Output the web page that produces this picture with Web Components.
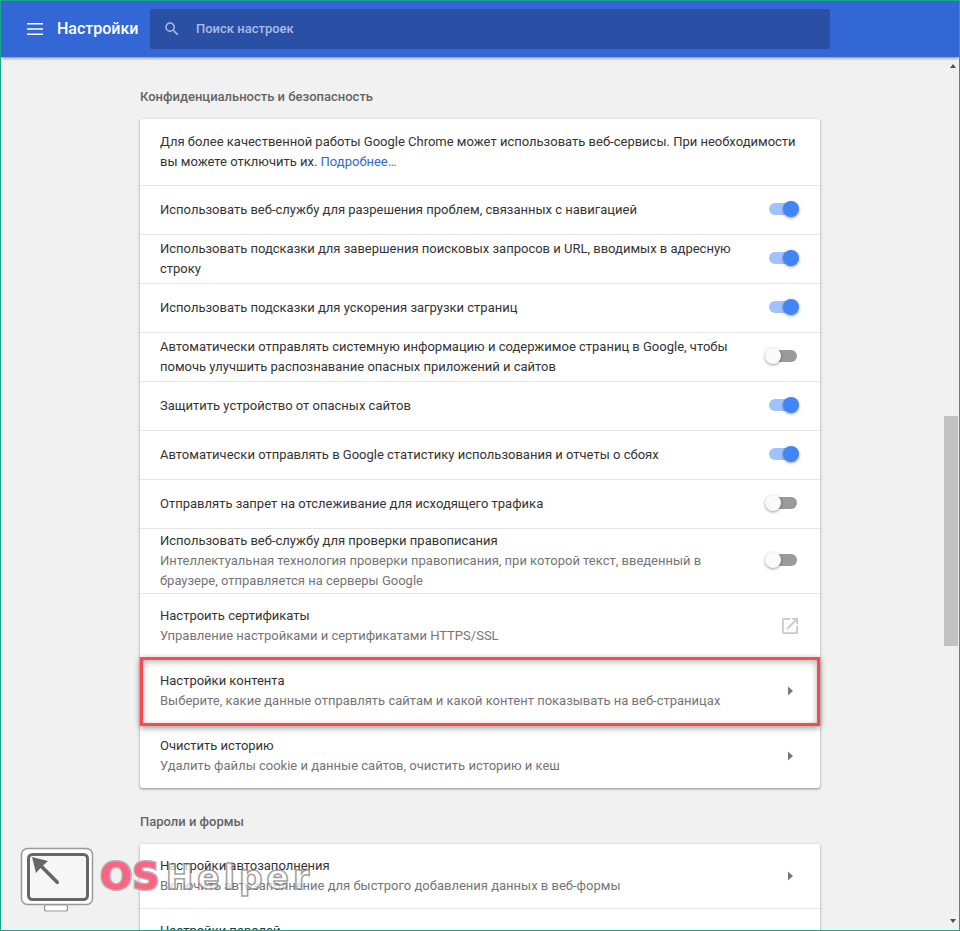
<!DOCTYPE html>
<html lang="ru"><head><meta charset="utf-8"><style>
html,body{margin:0;height:100%;overflow:hidden;background:#f1f1f1}
body{font:13px/20px Roboto,"Liberation Sans",sans-serif;color:#333}
</style></head><body>
<settings-app>
  <settings-section first heading="Конфиденциальность и безопасность">
    <settings-row kind="intro">Для более качественной работы Google Chrome может использовать веб-сервисы. При необходимости вы можете отключить их. <a href="#" style="color:#3367d6;text-decoration:none">Подробнее…</a></settings-row>
    <settings-row toggle="on">Использовать веб-службу для разрешения проблем, связанных с навигацией</settings-row>
    <settings-row toggle="on">Использовать подсказки для завершения поисковых запросов и URL, вводимых в адресную строку</settings-row>
    <settings-row toggle="on">Использовать подсказки для ускорения загрузки страниц</settings-row>
    <settings-row toggle="off">Автоматически отправлять системную информацию и содержимое страниц в Google, чтобы помочь улучшить распознавание опасных приложений и сайтов</settings-row>
    <settings-row toggle="on">Защитить устройство от опасных сайтов</settings-row>
    <settings-row toggle="on">Автоматически отправлять в Google статистику использования и отчеты о сбоях</settings-row>
    <settings-row toggle="off">Отправлять запрет на отслеживание для исходящего трафика</settings-row>
    <settings-row toggle="off" sub="Интеллектуальная технология проверки правописания, при которой текст, введенный в браузере, отправляется на серверы Google">Использовать веб-службу для проверки правописания</settings-row>
    <settings-row trail="external" sub="Управление настройками и сертификатами HTTPS/SSL">Настроить сертификаты</settings-row>
    <settings-row trail="arrow" marked sub="Выберите, какие данные отправлять сайтам и какой контент показывать на веб-страницах">Настройки контента</settings-row>
    <settings-row trail="arrow" sub="Удалить файлы cookie и данные сайтов, очистить историю и кеш">Очистить историю</settings-row>
  </settings-section>
  <settings-section heading="Пароли и формы">
    <settings-row trail="arrow" sub="Включить автозаполнение для быстрого добавления данных в веб-формы">Настройки автозаполнения</settings-row>
    <settings-row trail="arrow" sub="Предложения сохранять пароли">Настройки паролей</settings-row>
  </settings-section>
</settings-app>
<script>
customElements.define('settings-toggle',class extends HTMLElement{
  connectedCallback(){
    const s=this.attachShadow({mode:'open'});
    s.innerHTML=`<style>
    :host{display:block;position:relative;width:34px;height:16px;flex:none;margin:-2px 1px 0 0}
    .track{position:absolute;left:4px;right:2px;top:2px;height:12px;border-radius:6px;background:#9a9a9a}
    .knob{position:absolute;left:0;top:0;width:16px;height:16px;border-radius:50%;background:#fafafa;box-shadow:0 1px 3px rgba(0,0,0,.4)}
    :host([on]) .track{background:#a0c3ff}
    :host([on]) .knob{left:18px;background:#4285f4}
    </style><div class="track"></div><div class="knob"></div>`;
  }
});
customElements.define('settings-row',class extends HTMLElement{
  connectedCallback(){
    const s=this.attachShadow({mode:'open'});
    const sub=this.getAttribute('sub'), tg=this.getAttribute('toggle'), tr=this.getAttribute('trail');
    let end='';
    if(tg) end=`<settings-toggle ${tg==='on'?'on':''}></settings-toggle>`;
    if(tr==='arrow') end=`<svg class="ic" width="5" height="10" viewBox="0 0 5 10"><path d="M0 0.5 5 5 0 9.5z" fill="#777"/></svg>`;
    if(tr==='external') end=`<svg class="ext" width="16" height="16" viewBox="3 3 18 18"><path fill="#c9c9c9" d="M19 19H5V5h7V3H5a2 2 0 0 0-2 2v14a2 2 0 0 0 2 2h14a2 2 0 0 0 2-2v-7h-2v7zM14 3v2h3.59l-9.83 9.83 1.41 1.41L19 6.41V10h2V3h-7z"/></svg>`;
    s.innerHTML=`<style>
    :host{display:flex;align-items:center;box-sizing:border-box;min-height:49px;padding:0 20px;border-top:1px solid #e6e6e6;position:relative}
    :host(:first-child){border-top:0}
    :host([kind=intro]){min-height:66px}
    :host([sub]){min-height:65px}
    :host([sub]:first-child){min-height:64px}
    .main{flex:1;min-width:0;padding-right:20px;color:#333}
    :host([kind=intro]) .main{padding-right:0}
    .sub{color:#757575}
    .ic{flex:none;margin-right:7px}
    .ext{flex:none;margin-right:2px}
    .mark{position:absolute;left:0;right:0;top:-2px;bottom:-3px;border:3px solid #f64a4f;box-shadow:0 2px 6px rgba(0,0,0,.4),inset 0 2px 6px rgba(0,0,0,.3);pointer-events:none;z-index:2}
    </style><div class="main"><slot></slot>${sub?`<div class="sub">${sub}</div>`:''}</div>${end}${this.hasAttribute('marked')?'<div class="mark"></div>':''}`;
  }
});
customElements.define('settings-section',class extends HTMLElement{
  connectedCallback(){
    const s=this.attachShadow({mode:'open'});
    s.innerHTML=`<style>
    :host{display:block;width:680px}
    h2{margin:0;font:500 13px/20px Roboto,"Liberation Sans",sans-serif;color:#646464;padding:24px 0 12px}
    :host([first]) h2{padding-top:30px}
    .card{background:#fff;border-radius:2px;box-shadow:0 1px 2px rgba(0,0,0,.3),0 1px 3px 1px rgba(0,0,0,.1)}
    </style><h2>${this.getAttribute('heading')}</h2><div class="card"><slot></slot></div>`;
  }
});
customElements.define('settings-watermark',class extends HTMLElement{
  connectedCallback(){
    const s=this.attachShadow({mode:'open'});
    s.innerHTML=`<style>
    :host{position:absolute;left:19px;top:846px;display:flex;align-items:flex-start;pointer-events:none;z-index:5}
    svg{flex:none}
    .t{margin:7px 0 0 6px;white-space:nowrap;display:flex;align-items:baseline}
    .os{color:#fb6482;font:700 38px/44px "DejaVu Sans",sans-serif;-webkit-text-stroke:3px #b4b4b4;paint-order:stroke fill}
    .h{color:rgba(255,255,255,.7);font:700 33px/44px "DejaVu Sans",sans-serif;letter-spacing:4px;margin-left:6px;-webkit-text-stroke:1.6px rgba(120,120,120,.7)}
    </style><svg width="74" height="66" viewBox="0 0 74 66">
      <rect x="1.5" y="1.5" width="71" height="56" rx="6" fill="#fff" stroke="#999" stroke-width="1.5"/>
      <rect x="8.5" y="7.5" width="59" height="45" rx="4" fill="#f6f6f6" stroke="#666" stroke-width="3"/>
      <rect x="24.5" y="58" width="23" height="6" rx="2" fill="#fff" stroke="#999" stroke-width="1.2"/>
      <path d="M12 10l16 4-5 4.5L38.5 34a1.8 1.8 0 0 1-2.6 2.6L20.5 21l-4.5 5z" fill="#666"/>
    </svg><div class="t"><span class="os">OS</span><span class="h">Helper</span></div>`;
  }
});
customElements.define('settings-app',class extends HTMLElement{
  connectedCallback(){
    const s=this.attachShadow({mode:'open'});
    s.innerHTML=`<style>
    :host{display:flex;flex-direction:column;box-sizing:border-box;height:931px;width:960px;border:1px solid #16a88c;position:relative;overflow:hidden}
    header{flex:none;height:56px;background:#3367d6;display:flex;align-items:center;box-shadow:0 1px 3px rgba(0,0,0,.5);position:relative;z-index:3}
    .menu{margin-left:26px;flex:none}
    .title{color:#fff;font:500 16px/20px Roboto,"Liberation Sans",sans-serif;width:93px;margin-left:14px}
    .search{width:680px;height:40px;background:#2a50a6;border-radius:2px;display:flex;align-items:center;color:#a9bce6;font-weight:500}
    .search svg{margin-left:13px;margin-right:15px}
    main{flex:1;min-height:0;display:flex;position:relative;overflow:hidden}
    .content{flex:1;min-width:0;padding-left:139px;overflow:hidden}
    .bar{position:absolute;right:1px;top:0;bottom:0;width:14px}
    .up,.down{position:absolute;left:6px;width:0;height:0;border-left:3.5px solid transparent;border-right:3.5px solid transparent}
    .up{top:7px;border-bottom:4px solid #505050}
    .down{bottom:7px;border-top:4px solid #505050}
    .thumb{position:absolute;left:0;right:0;top:359px;height:230px;background:#c1c1c1}
    </style>
    <header>
      <svg class="menu" width="16" height="12" viewBox="0 0 16 12"><path fill="#fff" d="M0 0h16v1.6H0zM0 5.2h16v1.6H0zM0 10.4h16V12H0z"/></svg>
      <div class="title">Настройки</div>
      <div class="search"><svg width="18" height="18" viewBox="0 0 24 24"><path fill="#a9bce6" d="M15.5 14h-.79l-.28-.27A6.47 6.47 0 0 0 16 9.5 6.5 6.5 0 1 0 9.5 16c1.61 0 3.09-.59 4.23-1.57l.27.28v.79l5 4.99L20.49 19l-4.99-5zm-6 0C7.01 14 5 11.99 5 9.5S7.01 5 9.5 5 14 7.01 14 9.5 11.99 14 9.5 14z"/></svg>Поиск настроек</div>
    </header>
    <main><div class="content"><slot></slot></div>
      <div class="bar"><div class="up"></div><div class="thumb"></div><div class="down"></div></div>
    </main>
    <settings-watermark></settings-watermark>`;
  }
});
</script>
</body></html>
